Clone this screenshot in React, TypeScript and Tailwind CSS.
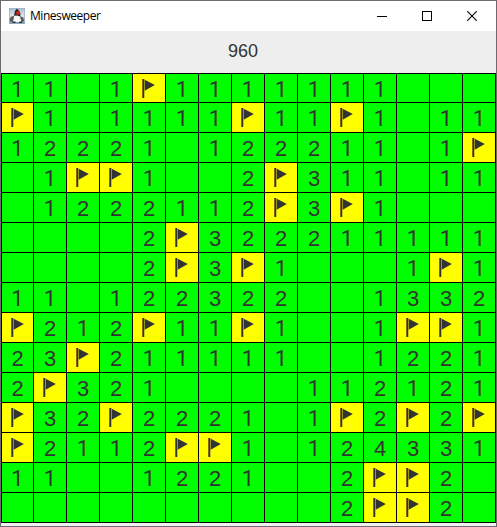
const board = [
  "11 1F1111111   ",
  "F1 1111F11F1 11",
  "12221 122211 1F",
  " 1FF1  2F311 11",
  " 1222112F3F1   ",
  "    2F322211111",
  "    2F3F1   1F1",
  "11 122322  1332",
  "F212F11F1  1FF1",
  "23F211111  1221",
  "2F321    112121",
  "F32F2221 1F2F2F",
  "F2112FF1 124331",
  "11  1221  2FF2 ",
  "          2FF2 ",
];

function Flag() {
  return (
    <svg width="14" height="20" viewBox="0 0 14 20" className="block">
      <rect x="0.2" y="0" width="1" height="19" fill="#6b3a2c" />
      <rect x="1" y="0" width="1" height="19" fill="#333333" />
      <rect x="2" y="0" width="0.6" height="19" fill="#8fa326" />
      <path d="M2.7 0.7 L12.8 6 L2.7 11.8 Z" fill="#333333" />
    </svg>
  );
}

function JavaIcon() {
  return (
    <svg width="16" height="16" viewBox="0 0 16 16" className="block">
      <defs>
        <linearGradient id="tile" x1="0" y1="0" x2="0" y2="1">
          <stop offset="0" stopColor="#a9bccb" />
          <stop offset="0.5" stopColor="#dfe6ea" />
          <stop offset="1" stopColor="#6f8ba3" />
        </linearGradient>
      </defs>
      <rect x="0.3" y="0.3" width="15.4" height="15.4" fill="url(#tile)" stroke="#8ba4b8" strokeWidth="0.6" />
      <path d="M4 14 L5 8 H11 L12.5 14 Z" fill="#f7f7f7" />
      <path d="M5 7.8 L6 3 L7.8 0.8 L10 2.5 L11.6 6 L11 8.5 L8 7.5 Z" fill="#252525" />
      <path d="M0.8 11 L2 8.8 L5 7.8 L4.6 11 L3.6 13.8 L1 13.5 Z" fill="#5a5a5a" />
      <path d="M11 8.3 L14 9.2 L15 12 L14 14 L12.3 13.5 Z" fill="#5a5a5a" />
      <path d="M4 13.4 H6.5 V15 H3 Z M10.5 13.4 H13 V15 H10 Z" fill="#303030" />
      <circle cx="9" cy="5" r="1.9" fill="#dd1f1f" />
    </svg>
  );
}

function Cell({ value }: { value: string }) {
  if (value === "F") {
    return (
      <div className="border-r border-b border-black bg-[#ffff00] pt-[5px] pl-[9px]">
        <Flag />
      </div>
    );
  }
  return (
    <div className="border-r border-b border-black bg-[#00ff00] pt-[5px] text-center">
      {value === "1" ? <span className="font-[family-name:Roboto] leading-none">1</span> : value}
    </div>
  );
}

export default function App() {
  return (
    <div className="flex h-[527px] w-[497px] flex-col border border-[#6e6a6d] bg-[#f0f0f0]">
      <header className="flex h-[30px] items-center bg-white pr-px pl-2">
        <JavaIcon />
        <span className="ml-[5px] flex-1 font-['Open_Sans','Noto_Sans',sans-serif] text-[12px] leading-4 tracking-[-0.45px] text-black">
          Minesweeper
        </span>
        <div className="flex h-full text-black">
          <div className="flex w-[45px] items-center justify-center">
            <div className="h-px w-2.5 bg-black" />
          </div>
          <div className="flex w-[45px] items-center justify-center">
            <div className="size-2.5 border border-black" />
          </div>
          <div className="flex w-[46px] items-center justify-center">
            <svg width="10" height="10" viewBox="0 0 10 10">
              <path d="M0.2 0.2 L9.8 9.8 M9.8 0.2 L0.2 9.8" stroke="black" strokeWidth="1.1" />
            </svg>
          </div>
        </div>
      </header>
      <div className="flex h-[42px] items-center justify-center bg-[#eeeeee] pr-[11px] pb-px font-['Liberation_Sans',Arial,sans-serif] text-[18px] text-[#333333]">
        960
      </div>
      <main className="grid grid-cols-[32px_repeat(14,33px)] grid-rows-[29px_repeat(14,30px)] border-t border-l border-black font-['Liberation_Sans',Arial,sans-serif] text-[22px] leading-[22px] text-[#333333]">
        {board.flatMap((row, y) => row.split("").map((cell, x) => <Cell key={`${y}-${x}`} value={cell} />))}
      </main>
    </div>
  );
}
